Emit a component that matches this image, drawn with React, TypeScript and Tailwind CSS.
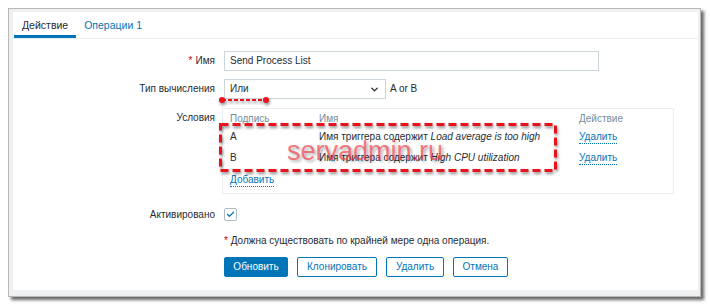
import { Check, ChevronDown } from "lucide-react";

const font = { fontFamily: '"Liberation Sans", Arial, sans-serif' };

function Link({ children }: { children: React.ReactNode }) {
  return (
    <span className="text-[#0275b8] border-b border-dotted border-[#0275b8] leading-[12px]">
      {children}
    </span>
  );
}

function Row({
  label,
  required,
  className,
  children,
}: {
  label: string;
  required?: boolean;
  className?: string;
  children: React.ReactNode;
}) {
  return (
    <div className={`flex ${className ?? ""}`}>
      <div className="w-[202px] shrink-0 flex items-center justify-end text-[#1f2c33]">
        {required && <span className="text-[#d40000] mr-[3px]">*</span>}
        {label}
      </div>
      <div className="ml-[9px] flex items-center">{children}</div>
    </div>
  );
}

export default function App() {
  return (
    <div className="relative w-[710px] h-[308px] bg-white text-[10px] leading-[14px]" style={font}>
      <div className="absolute left-[8px] top-[8px] w-[693px] h-[289px] border border-[#b8b8b8] bg-[#eef0f2] pl-[4px] pt-[3px] pr-[2px] pb-[6px] shadow-[3px_3px_3px_rgba(0,0,0,0.6)] flex">
        <div className="flex-1 bg-white flex flex-col">
          {/* tabs */}
          <div className="flex h-[27px] border-b border-[#ebeef0] text-[10.5px]">
            <div className="h-[26px] px-[8px] pt-[6px] border-b-[3px] border-[#0275b8] text-[#1f2c33] ml-px">
              Действие
            </div>
            <div className="h-[26px] px-[8px] pt-[6px] text-[#0275b8]">Операции 1</div>
          </div>

          <Row label="Имя" required className="mt-[12px] h-[20px]">
            <div className="w-[375px] h-[20px] border border-[#ccd5d9] px-[5px] flex items-center text-[#1f2c33]">
              Send Process List
            </div>
          </Row>

          <Row label="Тип вычисления" className="mt-[8px] h-[20px]">
            <div className="w-[162px] h-[20px] border border-[#ccd5d9] px-[5px] flex items-center justify-between text-[#1f2c33]">
              <span>Или</span>
              <ChevronDown size={11} strokeWidth={3} className="text-[#1f2c33]" />
            </div>
            <span className="ml-[4px] text-[#1f2c33]">A or B</span>
          </Row>

          <div className="flex mt-[9px]">
            <div className="w-[202px] shrink-0 text-right text-[#1f2c33] pt-[3px]">Условия</div>
            <div className="ml-[7px] w-[452px] h-[86px] border border-[#ebeef0] px-[7px] pt-px flex flex-col">
              <div className="flex h-[17px] items-center text-[#768d99]">
                <div className="w-[89px]">Подпись</div>
                <div className="w-[260px]">Имя</div>
                <div>Действие</div>
              </div>
              <div className="flex h-[20px] items-center text-[#1f2c33]">
                <div className="w-[89px]">A</div>
                <div className="w-[260px]">
                  Имя триггера содержит <i>Load average is too high</i>
                </div>
                <Link>Удалить</Link>
              </div>
              <div className="flex h-[22px] items-center text-[#1f2c33]">
                <div className="w-[89px]">B</div>
                <div className="w-[260px]">
                  Имя триггера содержит <i>High CPU utilization</i>
                </div>
                <Link>Удалить</Link>
              </div>
              <div className="flex h-[22px] items-center">
                <Link>Добавить</Link>
              </div>
            </div>
          </div>

          <Row label="Активировано" className="mt-[14px] h-[13px]">
            <div className="w-[13px] h-[13px] border border-[#acbbc2] rounded-[2px] flex items-center justify-center">
              <Check size={9} strokeWidth={3.5} className="text-[#0275b8]" />
            </div>
          </Row>

          <div className="mt-[13px] ml-[211px] text-[#1f2c33]">
            <span className="text-[#d40000]">*</span> Должна существовать по крайней мере одна операция.
          </div>

          <div className="mt-[9px] ml-[211px] flex gap-[9px]">
            <button className="h-[20px] w-[64px] rounded-[2px] bg-[#0275b8] border border-[#0275b8] text-white">
              Обновить
            </button>
            <button className="h-[20px] w-[80px] rounded-[2px] bg-white border border-[#0275b8] text-[#0275b8]">
              Клонировать
            </button>
            <button className="h-[20px] w-[58px] rounded-[2px] bg-white border border-[#0275b8] text-[#0275b8]">
              Удалить
            </button>
            <button className="h-[20px] w-[55px] rounded-[2px] bg-white border border-[#0275b8] text-[#0275b8]">
              Отмена
            </button>
          </div>
        </div>
      </div>

      {/* annotation overlay */}
      <svg
        className="absolute left-0 top-0 pointer-events-none"
        width={710}
        height={308}
        style={{ filter: "drop-shadow(1px 2px 1.5px rgba(0,0,0,0.45))" }}
      >
        <rect x={220.5} y={124.5} width={335} height={46} fill="none" stroke="#e8141c" strokeWidth={3} strokeDasharray="8 4" />
        <line x1={222} y1={100} x2={266} y2={100} stroke="#e8141c" strokeWidth={2} strokeDasharray="4 2" />
        <circle cx={222} cy={100} r={3} fill="#e8141c" />
        <circle cx={266} cy={100} r={3} fill="#e8141c" />
      </svg>

      <div
        className="absolute left-[287px] top-[138px] text-[27px] leading-none text-[rgba(242,60,70,0.68)] pointer-events-none"
        style={{ textShadow: "2px 2px 3px rgba(0,0,0,0.3)" }}
      >
        servadmin.ru
      </div>
    </div>
  );
}
